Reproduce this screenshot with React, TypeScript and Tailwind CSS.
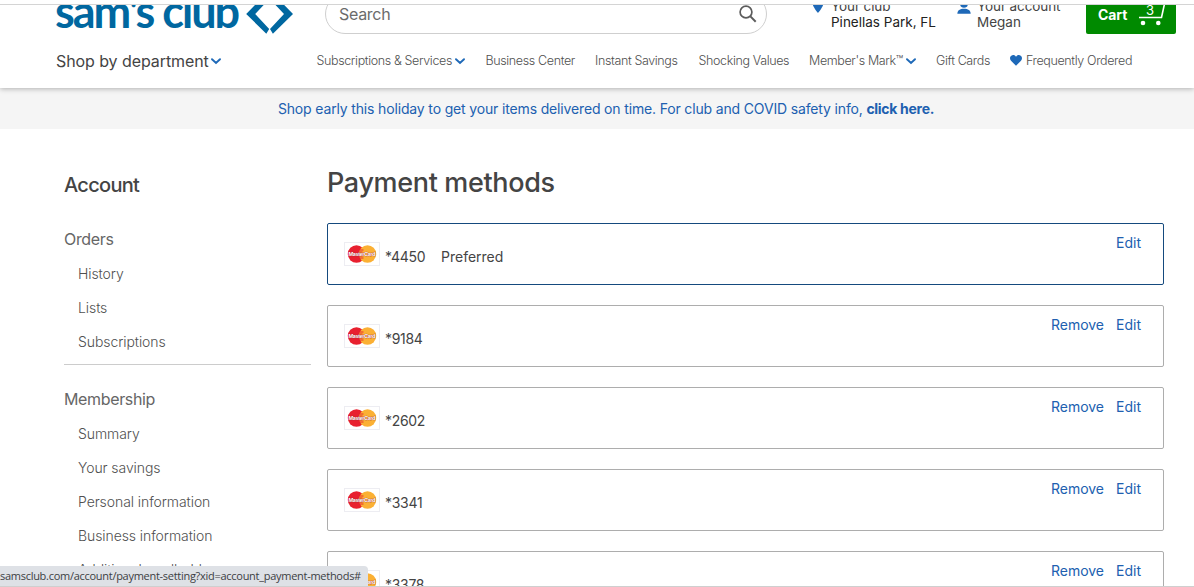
import { ReactNode } from "react";

interface PaymentCard {
  digits: string;
  preferred?: boolean;
}

const cards: PaymentCard[] = [
  { digits: "*4450", preferred: true },
  { digits: "*9184" },
  { digits: "*2602" },
  { digits: "*3341" },
  { digits: "*3378" },
];

const orderLinks = ["History", "Lists", "Subscriptions"];

const membershipLinks = [
  "Summary",
  "Your savings",
  "Personal information",
  "Business information",
  "Additional cardholders",
];

const Chevron = ({ className = "" }: { className?: string }) => (
  <svg viewBox="0 0 10 7" className={`h-[7px] w-[10px] shrink-0 ${className}`} fill="none">
    <path d="M1 1.2 5 5 9 1.2" stroke="#1e69b8" strokeWidth="1.9" strokeLinecap="round" />
  </svg>
);

const MasterCard = () => (
  <svg viewBox="0 0 36 24" className="h-6 w-9 shrink-0">
    <rect x="0.5" y="0.5" width="35" height="23" fill="#fff" stroke="#ededf2" />
    <circle cx="12.5" cy="12" r="8.7" fill="#e8202f" />
    <circle cx="23.5" cy="12" r="8.7" fill="#fbb034" />
    <path d="M15 8h4.5M14.5 10h4M14.5 14h4M15 16h4.5" stroke="#e8202f" strokeWidth="0.9" />
    <text
      x="18"
      y="14.2"
      textAnchor="middle"
      textLength="27"
      fontFamily="Liberation Sans"
      fontWeight="700"
      fontSize="5.8"
      fill="#fff"
      stroke="#a5323a"
      strokeWidth="0.5"
      paintOrder="stroke"
    >
      MasterCard
    </text>
  </svg>
);

const NavItem = ({ children, className }: { children: ReactNode; className: string }) => (
  <a href="#" className={`flex shrink-0 items-center whitespace-nowrap ${className}`}>
    {children}
  </a>
);

const Header = () => (
  <header className="relative z-10 flex h-[83px] flex-col bg-white shadow-[0_1px_5px_rgba(0,0,0,0.28)]">
    <div className="-mt-[11px] flex h-10 shrink-0 pl-14">
      <a href="#" className="flex w-[269px] shrink-0">
        <span className="-mt-[3px] -ml-px w-[190px] whitespace-nowrap font-['Lato'] text-[45px] leading-10 font-bold tracking-[-2px] text-[#0067a0]">
          sam's club
        </span>
        <svg viewBox="0 0 49 40" className="h-10 w-[49px]" fill="#0067a0">
          <path d="M17.8 3 1.2 20 21.3 39.7 24.2 35 10.2 20 26.2 3Z" />
          <path d="M31.400 3 48 20 27.900 39.700 25 35 39 20 23 3Z" />
        </svg>
      </a>
      <div className="flex h-10 w-[442px] shrink-0 items-center justify-between rounded-full border border-[#cfcfcf] pr-[9px] pl-[13px]">
        <span className="text-[16px] tracking-[-0.3px] text-[#6b6b6b]">Search</span>
        <svg viewBox="0 0 18 18" className="h-[18px] w-[18px]" fill="none">
          <circle cx="7" cy="7" r="5.9" stroke="#5c5c5c" strokeWidth="1.7" />
          <path d="m11.4 11.4 5.3 5.3" stroke="#5c5c5c" strokeWidth="2" />
        </svg>
      </div>
      <div className="ml-[45px] flex w-[145px] shrink-0">
        <svg viewBox="0 0 12 16" className="mt-[3px] h-4 w-3 shrink-0">
          <path d="M6 0a5.6 5.6 0 0 0-5.6 5.6C.4 9.6 6 16 6 16s5.6-6.4 5.6-10.4A5.6 5.6 0 0 0 6 0Z" fill="#1e69b8" />
          <circle cx="6" cy="6" r="2" fill="#fff" />
        </svg>
        <div className="ml-[7px] pt-1 text-[13.5px] leading-4 whitespace-nowrap text-[#222]">
          <div className="tracking-[-0.1px] text-[#444]">Your club</div>
          <div>Pinellas Park, FL</div>
        </div>
      </div>
      <div className="flex w-[129px] shrink-0">
        <svg viewBox="0 0 14 16" className="mt-1 h-4 w-[14px] shrink-0" fill="#1e69b8">
          <circle cx="7" cy="6" r="3.8" />
          <path d="M.3 15.8c.3-3.6 2.5-5 6.7-5s6.4 1.4 6.7 5Z" />
        </svg>
        <div className="ml-[6px] pt-1 text-[13.5px] leading-4 whitespace-nowrap text-[#444]">
          <div className="tracking-[-0.1px] text-[#444]">Your account</div>
          <div>Megan</div>
        </div>
      </div>
      <div className="relative flex h-10 w-[90px] shrink-0 items-center rounded-[2px] bg-[#008a00] pl-3 text-white">
        <span className="text-[14px] font-bold tracking-[-0.1px]">Cart</span>
        <svg viewBox="0 0 28 30" className="absolute top-[3px] left-[52px] h-[30px] w-7" fill="none">
          <path d="M1 20.5h22.5L28 0" stroke="#fff" strokeWidth="1.6" />
          <circle cx="5" cy="26" r="2.3" fill="#fff" />
          <circle cx="20.3" cy="26" r="2.3" fill="#fff" />
        </svg>
        <span className="absolute top-2 left-[60px] text-[13px] leading-4">3</span>
      </div>
    </div>
    <nav className="flex h-[54px] shrink-0 items-center pl-14 text-[12.5px] font-light tracking-[-0.37px] text-[#505050]">
      <NavItem className="w-[260.5px] text-[16px] font-normal tracking-[-0.08px] text-[#444]">
        Shop by department
        <Chevron className="ml-[2px]" />
      </NavItem>
      <NavItem className="w-[169px]">
        Subscriptions &amp; Services
        <Chevron className="ml-[3px]" />
      </NavItem>
      <NavItem className="w-[109.5px]">Business Center</NavItem>
      <NavItem className="w-[103.5px]">Instant Savings</NavItem>
      <NavItem className="w-[110.5px]">Shocking Values</NavItem>
      <NavItem className="w-[127px]">
        Member's Mark™
        <Chevron className="ml-[3px]" />
      </NavItem>
      <NavItem className="w-[74px]">Gift Cards</NavItem>
      <NavItem className="">
        <svg viewBox="0 0 12 11" className="mr-[4px] mb-[2px] h-[11px] w-3">
          <path d="M6 10.8 1 5.7C-.5 4.100-.2 1.700 1.300.7 2.900-.4 5 0 6 1.800 7 0 9.100-.4 10.700.7c1.500 1 1.800 3.400.3 5Z" fill="#1e69b8" />
        </svg>
        Frequently Ordered
      </NavItem>
    </nav>
  </header>
);

const SideGroup = ({ title, links }: { title: string; links: string[] }) => (
  <section>
    <h3 className="flex h-[35px] items-center text-[16px] tracking-[-0.35px] text-[#666]">{title}</h3>
    <ul>
      {links.map((link) => (
        <li
          key={link}
          className="flex h-[34px] items-center pl-[14px] text-[14px] font-light tracking-[-0.08px] text-[#505050]"
        >
          {link}
        </li>
      ))}
    </ul>
  </section>
);

const Sidebar = () => (
  <aside className="w-[247px] shrink-0">
    <h2 className="mt-[42px] text-[20px] leading-7 font-medium tracking-[-0.7px] text-[#444]">Account</h2>
    <div className="mt-[22px] border-b border-[#ccc] pb-[6px]">
      <SideGroup title="Orders" links={orderLinks} />
    </div>
    <div className="mt-4">
      <SideGroup title="Membership" links={membershipLinks} />
    </div>
  </aside>
);

const CardRow = ({ card }: { card: PaymentCard }) => (
  <li
    className={`flex h-[62px] rounded-[2px] border pr-[22px] pl-4 text-[14px] ${
      card.preferred ? "border-[#154a7e]" : "border-[#adadad]"
    }`}
  >
    <div className="pt-[18px]">
      <MasterCard />
    </div>
    <span className="mt-[23px] ml-[5px] w-[56px] leading-5 tracking-[-0.3px] text-[#444]">{card.digits}</span>
    {card.preferred && <span className="mt-[23px] leading-5 text-[#444]">Preferred</span>}
    <div className="mt-[9px] ml-auto flex gap-3 leading-5 text-[#2060b0]">
      {!card.preferred && <a href="#">Remove</a>}
      <a href="#">Edit</a>
    </div>
  </li>
);

const App = () => (
  <div className="relative flex h-[587px] w-[1194px] flex-col overflow-hidden bg-white font-['Inter',sans-serif]">
    <div className="h-[5px] shrink-0 border-b border-[#d4d4d4]" />
    <div className="h-[581px] shrink-0 overflow-hidden">
      <Header />
      <div className="flex h-[41px] items-center justify-center bg-[#f5f5f5] pl-[18px] text-[14px] tracking-[-0.155px] text-[#2060b0]">
        <p>
          Shop early this holiday to get your items delivered on time. For club and COVID safety info,{" "}
          <a href="#" className="font-bold tracking-[-0.3px]">click here.</a>
        </p>
      </div>
      <div className="flex gap-4 pr-[30px] pl-16">
        <Sidebar />
        <main className="grow">
          <h1 className="mt-[34px] text-[27px] leading-10 font-medium tracking-[-0.35px] text-[#444]">
            Payment methods
          </h1>
          <ul className="mt-5 flex flex-col gap-5">
            {cards.map((card) => (
              <CardRow key={card.digits} card={card} />
            ))}
          </ul>
        </main>
      </div>
    </div>
    <div className="h-px shrink-0 bg-[#cfcfcf]" />
    <div className="absolute bottom-px left-0 z-20 flex h-5 w-[368px] items-center rounded-tr-[4px] bg-[#dee1e6] font-['Open_Sans',sans-serif] text-[11px] tracking-[-0.28px] whitespace-nowrap text-[#3c4043]">
      samsclub.com/account/payment-setting?xid=account_payment-methods#
    </div>
  </div>
);

export default App;
